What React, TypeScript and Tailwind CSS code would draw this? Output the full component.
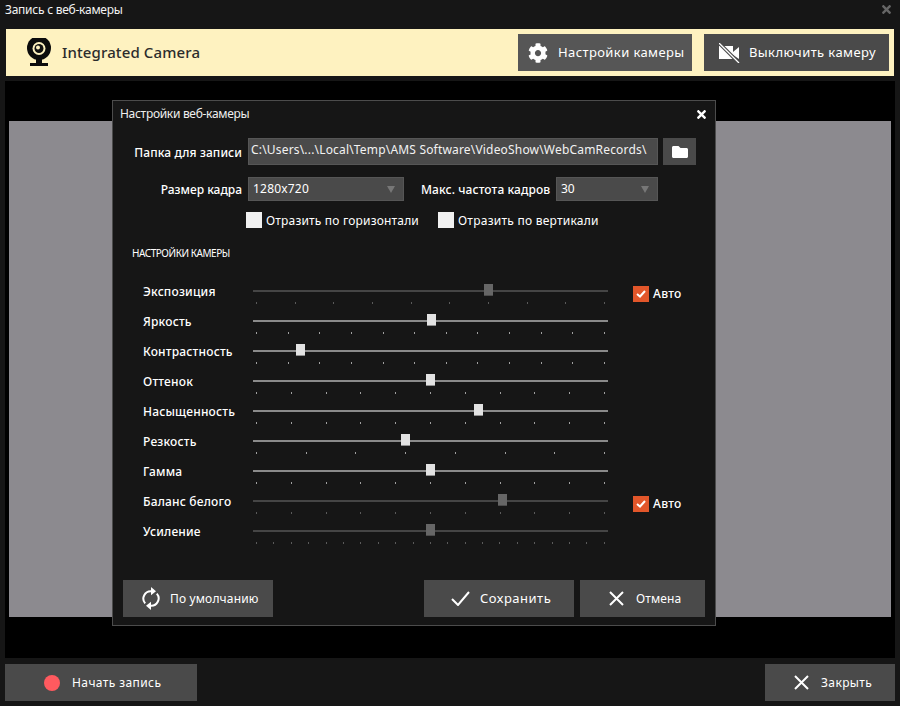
import { FaCog, FaFolder, FaTimes } from "react-icons/fa";

const sliders = [
  { label: "Экспозиция", thumb: 231, ticks: 10, off: true, auto: true },
  { label: "Яркость", thumb: 174, ticks: 12 },
  { label: "Контрастность", thumb: 43, ticks: 12 },
  { label: "Оттенок", thumb: 173, ticks: 11 },
  { label: "Насыщенность", thumb: 221, ticks: 11 },
  { label: "Резкость", thumb: 148, ticks: 8 },
  { label: "Гамма", thumb: 173, ticks: 11 },
  { label: "Баланс белого", thumb: 245, ticks: 11, off: true, auto: true },
  { label: "Усиление", thumb: 173, ticks: 21, off: true },
];

const CloseIcon = ({ size = 15 }: { size?: number }) => (
  <svg width={size} height={size} viewBox="0 0 15 15" fill="none" stroke="white" strokeWidth="2">
    <path d="M1 1l13 13M14 1L1 14" />
  </svg>
);

const CheckIcon = () => (
  <svg width="19" height="15" viewBox="0 0 19 15" fill="none" stroke="white" strokeWidth="2">
    <path d="M1 8l6 6L18 1" />
  </svg>
);

const WebcamIcon = () => (
  <svg width="26" height="29" viewBox="0 0 26 29" className="shrink-0">
    <circle cx="13" cy="10" r="12" fill="#0c0c0c" />
    <circle cx="13" cy="10.5" r="6.5" fill="#fef2c0" />
    <circle cx="13" cy="10.5" r="4.5" fill="#111" />
    <circle cx="12" cy="9.5" r="2" fill="#fef2c0" />
    <path d="M10 20h6v6h-6z" fill="#0c0c0c" />
    <rect x="4" y="25" width="18" height="3" fill="#0c0c0c" />
  </svg>
);

const CameraOffIcon = () => (
  <svg width="21" height="20" viewBox="0 0 21 20" className="shrink-0">
    <path d="M0 3h14v13H0z" fill="white" />
    <path d="M14 9l6-5v12l-6-4z" fill="white" />
    <path d="M0 0l20 20" stroke="#4a4a4a" strokeWidth="3.5" />
    <path d="M0 0l20 20" stroke="white" strokeWidth="1.3" />
  </svg>
);

const SyncIcon = () => (
  <svg width="18" height="23" viewBox="0 0 18 23" fill="none" className="shrink-0">
    <path d="M3.2 16.4A7.4 7.4 0 0 1 9.5 4.2" stroke="white" strokeWidth="2" />
    <path d="M14.8 6.6A7.4 7.4 0 0 1 8.5 18.8" stroke="white" strokeWidth="2" />
    <path d="M9 0l5 4.2L9 8.2z" fill="white" />
    <path d="M9 14.8l-5 4 5 4.2z" fill="white" />
  </svg>
);

const Arrow = () => (
  <svg width="8" height="7" viewBox="0 0 8 7" className="ml-auto mr-[8px]">
    <path d="M0 0h8L4 7z" fill="#777" />
  </svg>
);

const Box = () => <span className="h-[16px] w-[16px] shrink-0 bg-[#f0f0f0]" />;

const Auto = () => (
  <div className="ml-[25px] mt-[10px] flex h-[16px] items-center">
    <span className="flex h-[16px] w-[16px] items-center justify-center bg-[#e2562a]">
      <svg width="10" height="8" viewBox="0 0 10 8" fill="none" stroke="white" strokeWidth="2">
        <path d="M1 4l3 2.5L9 1" />
      </svg>
    </span>
    <span className="ml-[4px] text-[12px] font-medium tracking-[0.3px] text-white">Авто</span>
  </div>
);

const Slider = ({ thumb, ticks, off }: { thumb: number; ticks: number; off?: boolean }) => (
  <div className="relative w-[355px] pt-[14px]">
    <div className={off ? "relative h-[2px] bg-[#454545]" : "relative h-[2px] bg-[#8a8a8a]"}>
      <div
        className={
          off
            ? "absolute top-[-6px] h-[12px] w-[9px] border-b border-[#4c4c4c] bg-[#666666]"
            : "absolute top-[-6px] h-[12px] w-[9px] border-b border-[#8f8f8f] bg-[#e2e2e2]"
        }
        style={{ left: thumb }}
      />
    </div>
    <div className="mx-[3px] mt-[10px] flex justify-between">
      {Array.from({ length: ticks }).map((_, i) => (
        <span key={i} className={off ? "h-[2px] w-[1px] bg-[#5a5a5a]" : "h-[2px] w-[1px] bg-[#a0a0a0]"} />
      ))}
    </div>
  </div>
);

const App = () => {
  return (
    <div className="relative flex h-[706px] w-[900px] flex-col overflow-hidden bg-[#161616] font-['Noto_Sans',sans-serif] text-[#f2f2f2]">
      <div className="flex h-[29px] shrink-0 items-start justify-between pl-[5px] pr-[7px] pt-[1px] text-[12px] leading-[17px]">
        <span className="tracking-[-0.25px]">Запись с веб-камеры</span>
        <FaTimes className="mt-[2px] h-[13px] w-[13px] text-[#666666]" />
      </div>

      <div className="mx-[6px] flex h-[47px] shrink-0 items-center bg-[#fef2c0] pl-[20px] pr-[5px]">
        <WebcamIcon />
        <span className="ml-[10px] text-[15px] font-medium tracking-[0.12px] text-[#2c2c2c]">Integrated Camera</span>
        <button className="ml-auto flex h-[37px] w-[174px] items-center bg-[#565656] pl-[10px] text-[13px] tracking-[0.4px] text-white">
          <FaCog className="h-[20px] w-[20px]" />
          <span className="ml-[10px]">Настройки камеры</span>
        </button>
        <button className="ml-[12px] flex h-[37px] w-[185px] items-center bg-[#4a4a4a] pl-[15px] text-[13px] tracking-[0.4px] text-white">
          <CameraOffIcon />
          <span className="ml-[9px]">Выключить камеру</span>
        </button>
      </div>

      <div className="mx-[5px] mt-[5px] flex flex-1 flex-col bg-black px-[4px] pb-[41px] pt-[40px]">
        <div className="flex-1 bg-[#8c8a8f]" />
      </div>

      <div className="flex h-[48px] shrink-0 items-start justify-between px-[5px] pt-[6px] text-[12px] tracking-[0.4px] text-white">
        <button className="flex h-[37px] w-[192px] items-center bg-[#4a4a4a] pl-[39px]">
          <span className="h-[16px] w-[16px] rounded-full bg-[#ff5a5f]" />
          <span className="ml-[12px]">Начать запись</span>
        </button>
        <button className="flex h-[37px] w-[130px] items-center bg-[#4a4a4a] pl-[29px]">
          <CloseIcon />
          <span className="ml-[12px]">Закрыть</span>
        </button>
      </div>

      <div className="absolute left-[112px] top-[100px] flex h-[526px] w-[604px] flex-col border border-[#4c4c4c] bg-[#161616] text-[12px] text-white">
        <div className="flex h-[26px] shrink-0 items-center justify-between pl-[7px] pr-[7px] text-[#eeeeee]">
          <span className="tracking-[-0.3px]">Настройки веб-камеры</span>
          <FaTimes className="h-[13px] w-[13px] text-white" />
        </div>

        <div className="mt-[11px] flex h-[27px] shrink-0 items-center">
          <span className="w-[129px] pt-[2px] text-right font-medium tracking-[0.1px]">Папка для записи</span>
          <div className="ml-[6px] flex h-[27px] w-[410px] items-start whitespace-nowrap border border-[#565656] bg-[#4a4a4a] pl-[2px] leading-[22px] tracking-[0.18px] text-[#f2f2f2]">
            C:\Users\...\Local\Temp\AMS Software\VideoShow\WebCamRecords\
          </div>
          <button className="ml-[5px] flex h-[27px] w-[33px] items-center justify-center bg-[#4a4a4a]">
            <FaFolder className="h-[16px] w-[16px] text-white" />
          </button>
        </div>

        <div className="mt-[12px] flex h-[24px] shrink-0 items-center">
          <span className="w-[129px] pt-[2px] text-right font-medium">Размер кадра</span>
          <div className="ml-[6px] flex h-[24px] w-[156px] items-center border border-[#565656] bg-[#4a4a4a] pl-[4px] tracking-[0.2px]">
            1280x720
            <Arrow />
          </div>
          <span className="ml-[17px] w-[129px] whitespace-nowrap pt-[2px] text-right font-medium tracking-[0.1px]">Макс. частота кадров</span>
          <div className="ml-[6px] flex h-[24px] w-[102px] items-center border border-[#565656] bg-[#4a4a4a] pl-[4px]">
            30
            <Arrow />
          </div>
        </div>

        <div className="ml-[133px] mt-[11px] flex h-[16px] shrink-0 items-center">
          <Box />
          <span className="ml-[4px] w-[172px] pt-[2px] tracking-[0.18px]">Отразить по горизонтали</span>
          <Box />
          <span className="ml-[4px] pt-[2px] tracking-[0.24px]">Отразить по вертикали</span>
        </div>

        <div className="ml-[19px] mt-[18px] h-[14px] shrink-0 text-[10px] leading-[14px] tracking-[-0.45px]">НАСТРОЙКИ КАМЕРЫ</div>

        <div className="mt-[16px] flex shrink-0 flex-col">
          {sliders.map((s) => (
            <div key={s.label} className="flex h-[30px] pl-[30px]">
              <span className="w-[110px] font-medium leading-[31px] tracking-[0.2px]">{s.label}</span>
              <Slider thumb={s.thumb} ticks={s.ticks} off={s.off} />
              {s.auto && <Auto />}
            </div>
          ))}
        </div>

        <div className="mt-[34px] flex shrink-0 px-[10px]">
          <button className="flex h-[37px] w-[150px] items-center bg-[#4a4a4a] pl-[19px] tracking-[0.15px]">
            <SyncIcon />
            <span className="ml-[10px]">По умолчанию</span>
          </button>
          <button className="ml-auto flex h-[37px] w-[150px] items-center bg-[#4a4a4a] pl-[27px] text-[13px] tracking-[0.5px]">
            <CheckIcon />
            <span className="ml-[10px]">Сохранить</span>
          </button>
          <button className="ml-[6px] flex h-[37px] w-[125px] items-center bg-[#4a4a4a] pl-[29px] tracking-[0.1px]">
            <CloseIcon />
            <span className="ml-[12px]">Отмена</span>
          </button>
        </div>
      </div>
    </div>
  );
};

export default App;
